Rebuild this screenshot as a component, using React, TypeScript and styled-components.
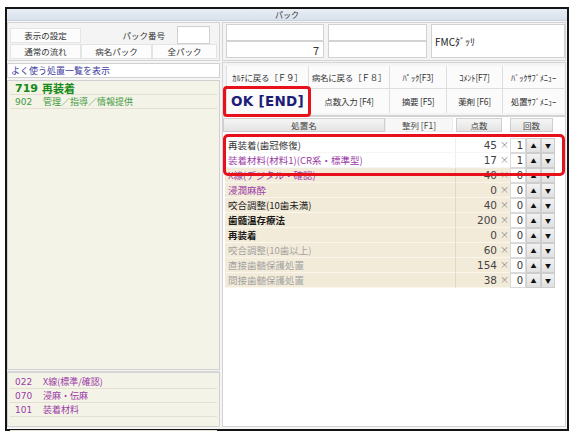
import React from 'react';
import styled, { createGlobalStyle } from 'styled-components';

const GlobalStyle = createGlobalStyle`
  html, body { margin: 0; padding: 0; background: #ffffff; }
  body { font-family: "Noto Sans CJK JP", "Noto Sans", sans-serif; color: #333; }
  * { box-sizing: border-box; }
`;

const Window = styled.div`
  margin: 7px 0 0 5px;
  width: 564px;
  height: 424px;
  border: 2px solid #151515;
  background: #f5f5f5;
  display: flex;
  flex-direction: column;
`;

const TitleBar = styled.div`
  height: 12px;
  flex-shrink: 0;
  background: linear-gradient(#e8eef5, #d8e1ec);
  border-bottom: 1px solid #c8d2de;
  font-size: 8px;
  line-height: 11px;
  text-align: center;
  color: #333;
`;

const Body = styled.div`
  flex: 1;
  min-height: 0;
  display: grid;
  grid-template-columns: 213px 344px;
  column-gap: 2px;
  padding: 1px 1px 2px 0;
`;

const Column = styled.div`
  display: flex;
  flex-direction: column;
  min-height: 0;
`;

const Panel = styled.div`
  border: 1px solid #d4d4d4;
  background: #f4f4f4;
`;

const SettingsBox = styled(Panel)`
  height: 39px;
  flex-shrink: 0;
  padding: 3px 2px 1px 2px;
  display: flex;
  flex-direction: column;
`;

const SettingsRow1 = styled.div`
  height: 18px;
  display: flex;
  align-items: center;
`;

const SettingsRow2 = styled.div`
  height: 15px;
  display: grid;
  grid-template-columns: 71px 71px 1fr;
`;

const SoftButton = styled.div<{ $w?: number }>`
  ${(p) => (p.$w ? `width: ${p.$w}px;` : '')}
  height: 15px;
  background: #fcfcfc;
  border: 1px solid #e4e4e4;
  font-size: 8.5px;
  line-height: 13px;
  text-align: center;
  color: #333;
  white-space: nowrap;
`;

const FieldLabel = styled.div`
  flex: 1;
  text-align: right;
  padding-right: 12px;
  font-size: 8.5px;
  color: #333;
`;

const SmallInput = styled.div`
  width: 33px;
  height: 18px;
  margin-right: 7px;
  background: #fff;
  border: 1px solid #d0d0d0;
`;

const ListHeader = styled.div`
  margin-top: 2px;
  height: 15px;
  flex-shrink: 0;
  border: 1px solid #d0d0d0;
  background: #fff;
  color: #3d3da0;
  font-size: 9px;
  line-height: 13px;
  padding-left: 3px;
`;

const FavList = styled.div`
  margin-top: 2px;
  flex: 1;
  border: 1px solid #d0d0d0;
  background: #f4f3e8;
  padding: 1px 2px;
`;

const BottomList = styled.div`
  margin-top: 1px;
  height: 56px;
  flex-shrink: 0;
  border: 1px solid #d0d0d0;
  border-top: 2px solid #d6d6d6;
  background: #f4f3e8;
  padding: 2px 2px;
`;

const ListRow = styled.div<{ $color: string; $bold?: boolean; $h?: number }>`
  height: ${(p) => p.$h ?? 14}px;
  display: flex;
  align-items: center;
  padding-left: 5px;
  border-bottom: 1px solid #e3e0d2;
  color: ${(p) => p.$color};
  font-size: ${(p) => (p.$bold ? '11px' : '9px')};
  font-weight: ${(p) => (p.$bold ? 700 : 400)};
  white-space: nowrap;
`;

const Code = styled.span<{ $w: number }>`
  width: ${(p) => p.$w}px;
  flex-shrink: 0;
  font-family: "DejaVu Sans", "Noto Sans", sans-serif;
`;

const InfoBox = styled(Panel)`
  height: 39px;
  flex-shrink: 0;
  padding: 1px 0 1px 3px;
  display: grid;
  grid-template-columns: 98px 99px 1fr;
  grid-template-rows: 17px 17px;
  column-gap: 4px;
`;

const InfoField = styled.div<{ $span?: boolean; $align?: string }>`
  background: #fff;
  border: 1px solid #d2d2d2;
  ${(p) => (p.$span ? 'grid-row: 1 / span 2; grid-column: 3;' : '')}
  display: flex;
  align-items: center;
  justify-content: ${(p) => p.$align ?? 'flex-start'};
  padding: 0 4px 0 3px;
  font-size: 11px;
  color: #333;
`;

const FmcText = styled.span`
  font-size: 10px;
  color: #222;
`;

const ButtonPanel = styled(Panel)`
  margin-top: 1px;
  height: 54px;
  flex-shrink: 0;
  padding: 3px 1px 1px 3px;
`;

const ButtonGrid = styled.div`
  display: grid;
  grid-template-columns: 81px 80px 56px 55px 1fr;
  grid-template-rows: 22px 24px;
  gap: 1px;
  background: #dedede;
  border-left: 1px solid #dedede;
`;

const FuncButton = styled.div`
  background: #fbfbfb;
  display: flex;
  align-items: center;
  justify-content: center;
  font-size: 8.5px;
  color: #333;
  white-space: nowrap;
  letter-spacing: -0.2px;
`;

const OkButton = styled(FuncButton)`
  position: relative;
  font-family: "DejaVu Sans", "Noto Sans", sans-serif;
  font-size: 13.5px;
  font-weight: 700;
  color: #1d1d78;
  letter-spacing: 0.3px;
  &::after {
    content: '';
    position: absolute;
    top: -3px;
    left: -4px;
    right: -3px;
    bottom: -4px;
    border: 3px solid #e8101a;
    border-radius: 4px;
  }
`;

const TablePanel = styled.div`
  flex: 1;
  min-height: 0;
  border: 1px solid #d2d2d2;
  background: #fff;
  padding: 1px 0 0 0;
`;

const HeaderRow = styled.div`
  display: flex;
  height: 14px;
`;

const HeadCell = styled.div<{ $w: number; $ml?: number; $plain?: boolean }>`
  width: ${(p) => p.$w}px;
  margin-left: ${(p) => p.$ml ?? 0}px;
  height: 14px;
  background: ${(p) => (p.$plain ? '#f7f7f7' : 'linear-gradient(#f6f6f6, #e4e4e4)')};
  border: 1px solid ${(p) => (p.$plain ? '#ececec' : '#cfcfcf')};
  font-size: 8.5px;
  line-height: 12px;
  text-align: center;
  color: #444;
`;

const Rows = styled.div`
  position: relative;
  margin: 6px 0 0 2px;
`;

const Highlight = styled.div`
  position: absolute;
  top: -4px;
  left: -2px;
  width: 342px;
  height: 42px;
  border: 3px solid #e8101a;
  border-radius: 5px;
  pointer-events: none;
`;

const Row = styled.div`
  display: grid;
  grid-template-columns: 231px 44px 10px 16px 15px 14px;
  height: 15px;
`;

const NameCell = styled.div<{ $tint: boolean; $color: string; $bold?: boolean }>`
  background: ${(p) => (p.$tint ? '#f3ebd9' : '#fff')};
  border-right: 1px solid ${(p) => (p.$tint ? '#e3d8bf' : '#eeeeee')};
  border-bottom: 1px solid ${(p) => (p.$tint ? '#faf6ec' : '#f6f6f6')};
  color: ${(p) => p.$color};
  font-weight: ${(p) => (p.$bold ? 700 : 400)};
  font-size: 9.5px;
  line-height: 14px;
  padding-left: 3px;
  white-space: nowrap;
  overflow: hidden;
`;

const PointCell = styled.div<{ $tint: boolean }>`
  background: ${(p) => (p.$tint ? '#f3ebd9' : '#fff')};
  border-bottom: 1px solid ${(p) => (p.$tint ? '#faf6ec' : '#f6f6f6')};
  font-family: "DejaVu Sans", "Noto Sans", sans-serif;
  font-size: 10.5px;
  line-height: 14px;
  text-align: right;
  padding-right: 3px;
  color: #444;
`;

const TimesCell = styled.div<{ $tint: boolean }>`
  background: ${(p) => (p.$tint ? '#f3ebd9' : '#fff')};
  border-bottom: 1px solid ${(p) => (p.$tint ? '#faf6ec' : '#f6f6f6')};
  font-size: 9px;
  line-height: 14px;
  color: #8a8a8a;
  text-align: left;
`;

const CountInput = styled.div`
  background: #fff;
  border: 1px solid #dadada;
  font-family: "DejaVu Sans", "Noto Sans", sans-serif;
  font-size: 10px;
  line-height: 13px;
  text-align: right;
  padding-right: 2px;
  color: #333;
`;

const ArrowButton = styled.div`
  background: linear-gradient(#f2f2f2, #e0e0e0);
  border: 1px solid #cdcdcd;
  display: flex;
  align-items: center;
  justify-content: center;
  font-size: 6px;
  color: #111;
`;

type Item = { name: string; pts: number; cnt: number; color: string; bold?: boolean };

const PURPLE = '#9b3aa5';
const GRAY = '#a3a3a3';

const items: Item[] = [
  { name: '再装着(歯冠修復)', pts: 45, cnt: 1, color: '#333' },
  { name: '装着材料(材料1)(CR系・標準型)', pts: 17, cnt: 1, color: PURPLE },
  { name: 'X線(デジタル・確認)', pts: 40, cnt: 0, color: PURPLE },
  { name: '浸潤麻酔', pts: 0, cnt: 0, color: PURPLE },
  { name: '咬合調整(10歯未満)', pts: 40, cnt: 0, color: '#222' },
  { name: '歯髄温存療法', pts: 200, cnt: 0, color: '#1a1a1a', bold: true },
  { name: '再装着', pts: 0, cnt: 0, color: '#1a1a1a', bold: true },
  { name: '咬合調整(10歯以上)', pts: 60, cnt: 0, color: GRAY },
  { name: '直接歯髄保護処置', pts: 154, cnt: 0, color: GRAY },
  { name: '間接歯髄保護処置', pts: 38, cnt: 0, color: GRAY },
];

const bottomItems = [
  { code: '022', name: 'X線(標準/確認)' },
  { code: '070', name: '浸麻・伝麻' },
  { code: '101', name: '装着材料' },
];

export default function App() {
  return (
    <>
      <GlobalStyle />
      <Window>
        <TitleBar>パック</TitleBar>
        <Body>
          <Column>
            <SettingsBox>
              <SettingsRow1>
                <SoftButton $w={71}>表示の設定</SoftButton>
                <FieldLabel>パック番号</FieldLabel>
                <SmallInput />
              </SettingsRow1>
              <SettingsRow2>
                <SoftButton>通常の流れ</SoftButton>
                <SoftButton>病名パック</SoftButton>
                <SoftButton>全パック</SoftButton>
              </SettingsRow2>
            </SettingsBox>
            <ListHeader>よく使う処置一覧を表示</ListHeader>
            <FavList>
              <ListRow $color="#168a16" $bold $h={13}>
                <Code $w={27}>719</Code>再装着
              </ListRow>
              <ListRow $color="#3f9a3f">
                <Code $w={28}>902</Code>管理／指導／情報提供
              </ListRow>
            </FavList>
            <BottomList>
              {bottomItems.map((b) => (
                <ListRow key={b.code} $color={PURPLE}>
                  <Code $w={28}>{b.code}</Code>
                  {b.name}
                </ListRow>
              ))}
              <ListRow $color={PURPLE} />
            </BottomList>
          </Column>
          <Column>
            <InfoBox>
              <InfoField />
              <InfoField />
              <InfoField $span>
                <FmcText>FMCﾀﾞｯﾘ</FmcText>
              </InfoField>
              <InfoField $align="flex-end">7</InfoField>
              <InfoField />
            </InfoBox>
            <ButtonPanel>
              <ButtonGrid>
                <FuncButton>ｶﾙﾃに戻る［Ｆ９］</FuncButton>
                <FuncButton>病名に戻る［Ｆ８］</FuncButton>
                <FuncButton>ﾊﾟｯｸ[F3]</FuncButton>
                <FuncButton>ｺﾒﾝﾄ[F7]</FuncButton>
                <FuncButton>ﾊﾞｯｸｻﾌﾞﾒﾆｭｰ</FuncButton>
                <OkButton>OK [END]</OkButton>
                <FuncButton>点数入力 [F4]</FuncButton>
                <FuncButton>摘要 [F5]</FuncButton>
                <FuncButton>薬剤 [F6]</FuncButton>
                <FuncButton>処置ｻﾌﾞﾒﾆｭｰ</FuncButton>
              </ButtonGrid>
            </ButtonPanel>
            <TablePanel>
              <HeaderRow>
                <HeadCell $w={162}>処置名</HeadCell>
                <HeadCell $w={68} $plain>整列 [F1]</HeadCell>
                <HeadCell $w={46} $ml={3}>点数</HeadCell>
                <HeadCell $w={43} $ml={8}>回数</HeadCell>
              </HeaderRow>
              <Rows>
                {items.map((it, i) => {
                  const tint = i >= 2;
                  return (
                    <Row key={i}>
                      <NameCell $tint={tint} $color={it.color} $bold={it.bold}>
                        {it.name}
                      </NameCell>
                      <PointCell $tint={tint}>{it.pts}</PointCell>
                      <TimesCell $tint={tint}>×</TimesCell>
                      <CountInput>{it.cnt}</CountInput>
                      <ArrowButton>▲</ArrowButton>
                      <ArrowButton>▼</ArrowButton>
                    </Row>
                  );
                })}
                <Highlight />
              </Rows>
            </TablePanel>
          </Column>
        </Body>
      </Window>
    </>
  );
}
